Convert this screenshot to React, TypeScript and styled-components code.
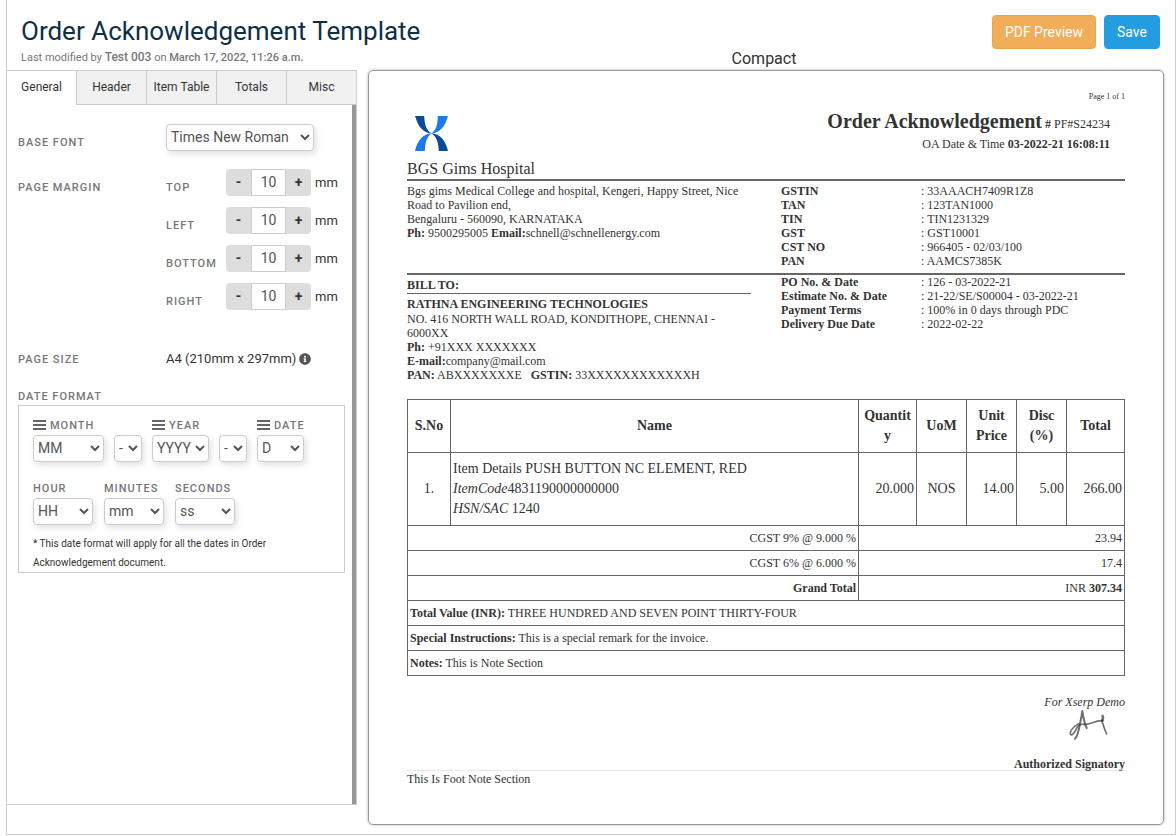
import React from "react";
import styled, { createGlobalStyle, css } from "styled-components";
import { FaInfoCircle } from "react-icons/fa";

const GlobalStyle = createGlobalStyle`
  *, *::before, *::after { box-sizing: border-box; }
  body {
    margin: 0;
    background: #fff;
    color: #333;
    font-family: Roboto, "Liberation Sans", sans-serif;
    font-size: 14px;
    line-height: 20px;
  }
`;

const Frame = styled.main`
  display: grid;
  grid-template-columns: 350px minmax(0, 1fr);
  grid-template-rows: 49px 21px 1fr;
  column-gap: 11px;
  min-height: calc(100vh - 1px);
  margin-left: 6px;
  border: 1px solid #ccc;
  border-top: 0;
`;

const TitleBlock = styled.header`
  grid-row: 1 / 3;
  padding: 14px 0 0 14px;
  white-space: nowrap;
`;

const Title = styled.h1`
  margin: 0;
  color: #0f2f47;
  font-size: 26px;
  font-weight: 400;
  line-height: 34px;
`;

const Modified = styled.p`
  margin: 0;
  color: #777;
  font-size: 11px;
  line-height: 18px;

  b {
    font-weight: 500;
  }
`;

const Editor = styled.b`
  font-size: 12px;
`;

const Actions = styled.div`
  grid-column: 2;
  display: flex;
  justify-content: flex-end;
  gap: 8px;
  padding: 15px 15px 0 0;
`;

const ActionButton = styled.button<{ $tone: "orange" | "blue" }>`
  height: 34px;
  padding: 0 12px;
  border: 1px solid ${(p) => (p.$tone === "orange" ? "#eea249" : "#239ddf")};
  border-radius: 4px;
  background: ${(p) => (p.$tone === "orange" ? "#f0ad5a" : "#239ddf")};
  color: #fff;
  font: 14px/20px Roboto, sans-serif;
  cursor: pointer;
`;

const LayoutName = styled.h2`
  grid-column: 2;
  margin: 0 15px 0 0;
  font-size: 16px;
  font-weight: 400;
  line-height: 20px;
  text-align: center;
`;

const Settings = styled.section`
  display: flex;
  flex-direction: column;
  margin-bottom: 29px;
  border-bottom: 1px solid #ccc;
  border-right: 1px solid #ccc;
`;

const Tabs = styled.div`
  display: grid;
  grid-template-columns: 69px repeat(4, 1fr);
  border-top: 1px solid #ccc;
`;

const Tab = styled.button<{ $active?: boolean }>`
  height: 34px;
  padding: 0 0 2px;
  border: solid #ccc;
  border-width: 0 0 1px 1px;
  background: #f1f1f1;
  color: #333;
  font: 12px/20px Roboto, sans-serif;
  white-space: nowrap;
  cursor: pointer;
  ${(p) =>
    p.$active &&
    css`
      border-color: transparent;
      border-left-width: 0;
      background: #fff;
    `}
`;

const Panel = styled.div`
  flex: 1;
  padding: 19px 7px 20px 11px;
  border-right: 4px solid #979797;
`;

const fieldLabel = css`
  color: #777;
  font-size: 11px;
  font-weight: 500;
  letter-spacing: 1px;
  line-height: 16px;
`;

const FieldRow = styled.div`
  display: grid;
  grid-template-columns: 148px 1fr;
  margin-bottom: 18px;
`;

const FieldLabel = styled.label`
  ${fieldLabel}
  padding-top: 11px;
`;

const FieldName = styled.span`
  ${fieldLabel}
  padding-top: 11px;
`;

const Select = styled.select<{ $width: number }>`
  width: ${(p) => p.$width}px;
  height: 27px;
  padding: 0 0 1px;
  border: 1px solid #ccc;
  border-radius: 4px;
  background: #fff;
  box-shadow: 2px 3px 6px rgba(0, 0, 0, 0.12);
  color: #555;
  font: 14px/20px Roboto, sans-serif;
`;

const Margins = styled.div`
  display: grid;
  gap: 11px;
`;

const MarginRow = styled.div`
  display: grid;
  grid-template-columns: 60px 85px auto;
  height: 27px;
`;

const Stepper = styled.div`
  display: grid;
  grid-template-columns: 25px 35px 25px;
  overflow: hidden;
  border-radius: 4px;
`;

const StepButton = styled.button`
  padding: 0 0 2px;
  border: 0;
  background: #ddd;
  color: #333;
  font: bold 14px/20px Roboto, sans-serif;
  cursor: pointer;
`;

const StepInput = styled.input`
  width: 35px;
  padding: 0 0 1px;
  border: 1px solid #ccc;
  background: #fff;
  color: #555;
  font: 14px/20px Roboto, sans-serif;
  text-align: center;
`;

const Unit = styled.span`
  padding: 4px 0 0 4px;
  font-size: 13px;
`;

const PageSizeRow = styled.div`
  display: grid;
  grid-template-columns: 148px 1fr;
  align-items: center;
  margin: 39px 0 19px;
`;

const PlainLabel = styled.span`
  ${fieldLabel}
  padding-top: 1px;
`;

const PageSize = styled.span`
  display: flex;
  align-items: center;
  gap: 3px;
  font-size: 13px;

  svg {
    color: #555;
  }
`;

const DateFormat = styled.fieldset`
  min-width: 0;
  margin: 0;
  padding: 0;
  border: 0;
`;

const DateLegend = styled.legend`
  ${fieldLabel}
  padding: 1px 0 0;
`;

const DateBox = styled.div`
  padding: 12px 14px 0;
  border: 1px solid #ccc;
`;

const DateRow = styled.div<{ $last?: boolean }>`
  display: flex;
  align-items: flex-end;
  gap: ${(p) => (p.$last ? 11 : 10)}px;
  margin-bottom: ${(p) => (p.$last ? 9 : 19)}px;
`;

const DatePart = styled.div`
  display: flex;
  flex-direction: column;
  gap: 1px;
`;

const PartLabel = styled.label`
  ${fieldLabel}
  display: flex;
  align-items: center;
  gap: 4px;
  white-space: nowrap;
`;

const DateNote = styled.p`
  margin: 0;
  font-size: 10px;
  line-height: 19px;
`;

const Sheet = styled.article`
  margin: 0 11px 9px 0;
  padding: 21px 38px 36px 38px;
  border: 1px solid #999;
  border-radius: 5px;
  box-shadow: 0 0 3px rgba(0, 0, 0, 0.3);
  font-family: "Liberation Serif", serif;
  font-size: 12px;
  line-height: 14px;
`;

const PageNumber = styled.div`
  font-size: 8px;
  line-height: 10px;
  text-align: right;
`;

const Masthead = styled.header`
  display: flex;
  justify-content: space-between;
  border-bottom: 2px solid #666;
`;

const Logo = styled.svg`
  display: block;
  margin: 14px 0 8px 8px;
`;

const CompanyName = styled.div`
  font-size: 16px;
  line-height: 20px;
`;

const DocHeading = styled.div`
  padding: 7px 15px 0 0;
  text-align: right;
`;

const DocTitle = styled.h2`
  margin: 0 0 1px;
  font-size: 12px;
  font-weight: 400;
  line-height: 24px;

  strong {
    font-size: 20px;
  }
`;

const Columns = styled.div<{ $ruled?: boolean }>`
  display: grid;
  grid-template-columns: minmax(0, 344fr) minmax(0, 344fr);
  column-gap: 30px;
  ${(p) => (p.$ruled ? "padding: 3px 0 5px; border-bottom: 2px solid #666;" : "padding-bottom: 17px;")}
`;

const Facts = styled.dl`
  display: grid;
  grid-template-columns: 140px 1fr;
  align-content: start;
  margin: 0;

  dt {
    font-weight: 700;
  }

  dd {
    margin: 0;
  }
`;

const BillTitle = styled.h3`
  margin: 0 0 3px;
  padding: 3px 0 1px;
  border-bottom: 1px solid #666;
  font-size: 12px;
`;

const PartyName = styled.div`
  margin-bottom: 1px;
  font-weight: 700;
`;

const Items = styled.table`
  width: 100%;
  border-collapse: collapse;
  table-layout: fixed;
`;

const HeadCell = styled.th<{ $width?: number }>`
  width: ${(p) => (p.$width ? `${p.$width}px` : "auto")};
  height: 53px;
  padding: 0 4px;
  border: 1px solid #666;
  font-size: 14px;
  line-height: 20px;
  overflow-wrap: break-word;
`;

const ItemCell = styled.td<{ $align?: string }>`
  height: 73px;
  padding: 0 2px;
  border: 1px solid #666;
  font-size: 14px;
  line-height: 20px;
  text-align: ${(p) => p.$align ?? "left"};
`;

const SumCell = styled.td<{ $align?: string }>`
  height: 25px;
  padding: 0 2px;
  border: 1px solid #666;
  text-align: ${(p) => p.$align ?? "left"};
`;

const Signature = styled.div`
  display: flex;
  flex-direction: column;
  align-items: flex-end;
  padding-top: 19px;
  border-bottom: 1px solid #e8e8e8;

  svg {
    display: block;
    margin: 0 16px 18px 0;
  }

  b {
    line-height: 12px;
  }
`;

const FootNote = styled.footer`
  padding-top: 1px;
`;

const Bars = () => (
  <svg width="13" height="12" viewBox="0 0 13 12" aria-hidden="true">
    <path d="M0 1h13M0 5h13M0 9h13" stroke="#666" strokeWidth="2" />
  </svg>
);

const CompanyLogo = () => (
  <Logo width="33" height="35" viewBox="0 0 97 103" role="img" aria-label="Company logo">
    <path d="M0 0H27C28 24 33 43 49 51C24 50 9 32 0 0Z" fill="#0c4a98" />
    <path d="M97 0H67C67 24 62 43 48 51C73 50 88 32 97 0Z" fill="#1b79ec" />
    <path d="M0 103H29C30 79 34 61 49 51C24 53 7 71 0 103Z" fill="#1b79ec" />
    <path d="M97 103H70C69 79 64 61 48 51C73 53 90 71 97 103Z" fill="#0c4a98" />
  </Logo>
);

const SignatureMark = () => (
  <svg width="40" height="31" viewBox="0 0 120 93" role="img" aria-label="Signature" fill="none" stroke="#333" strokeOpacity="0.7" strokeLinecap="round" strokeLinejoin="round">
    <path d="M18 89C26 84 30 60 34 40C37 25 39 13 40 6C42 20 46 42 53 57" strokeWidth="6" />
    <path d="M29 44C18 51 2 64 4 75C7 82 15 73 21 62C26 50 32 44 44 46C62 49 78 33 101 35" strokeWidth="5" />
    <path d="M101 21C103 25 102 29 100 35" strokeWidth="8" />
    <path d="M99 34C101 47 107 61 113 75" strokeWidth="5" />
  </svg>
);

const TABS = ["General", "Header", "Item Table", "Totals", "Misc"];
const MARGINS = ["Top", "Left", "Bottom", "Right"];

const COMPANY_FACTS = [
  ["GSTIN", "33AAACH7409R1Z8"],
  ["TAN", "123TAN1000"],
  ["TIN", "TIN1231329"],
  ["GST", "GST10001"],
  ["CST NO", "966405 - 02/03/100"],
  ["PAN", "AAMCS7385K"],
];

const ORDER_FACTS = [
  ["PO No. & Date", "126 - 03-2022-21"],
  ["Estimate No. & Date", "21-22/SE/S00004 - 03-2022-21"],
  ["Payment Terms", "100% in 0 days through PDC"],
  ["Delivery Due Date", "2022-02-22"],
];

const FactList = ({ rows }: { rows: string[][] }) => (
  <Facts>
    {rows.map(([name, value]) => (
      <React.Fragment key={name}>
        <dt>{name}</dt>
        <dd>: {value}</dd>
      </React.Fragment>
    ))}
  </Facts>
);

type PartProps = { id: string; label: string; value: string; width: number; movable?: boolean };

const DateSelect = ({ id, label, value, width, movable }: PartProps) => (
  <DatePart>
    <PartLabel htmlFor={id}>
      {movable && <Bars />}
      {label}
    </PartLabel>
    <Select id={id} $width={width}>
      <option>{value}</option>
    </Select>
  </DatePart>
);

const Separator = ({ label }: { label: string }) => (
  <Select $width={28} aria-label={label}>
    <option>-</option>
  </Select>
);

const GeneralPanel = () => (
  <Panel role="tabpanel" aria-label="General">
    <FieldRow>
      <FieldLabel htmlFor="base-font">BASE FONT</FieldLabel>
      <Select id="base-font" $width={148}>
        <option>Times New Roman</option>
      </Select>
    </FieldRow>
    <FieldRow>
      <FieldName>PAGE MARGIN</FieldName>
      <Margins>
        {MARGINS.map((side) => (
          <MarginRow key={side}>
            <FieldLabel htmlFor={`margin-${side}`}>{side.toUpperCase()}</FieldLabel>
            <Stepper>
              <StepButton type="button">-</StepButton>
              <StepInput id={`margin-${side}`} defaultValue="10" />
              <StepButton type="button">+</StepButton>
            </Stepper>
            <Unit>mm</Unit>
          </MarginRow>
        ))}
      </Margins>
    </FieldRow>
    <PageSizeRow>
      <PlainLabel>PAGE SIZE</PlainLabel>
      <PageSize>
        A4 (210mm x 297mm) <FaInfoCircle size={12} />
      </PageSize>
    </PageSizeRow>
    <DateFormat>
      <DateLegend>DATE FORMAT</DateLegend>
      <DateBox>
        <DateRow>
          <DateSelect id="month" label="MONTH" value="MM" width={71} movable />
          <Separator label="First separator" />
          <DateSelect id="year" label="YEAR" value="YYYY" width={57} movable />
          <Separator label="Second separator" />
          <DateSelect id="date" label="DATE" value="D" width={47} movable />
        </DateRow>
        <DateRow $last>
          <DateSelect id="hour" label="HOUR" value="HH" width={60} />
          <DateSelect id="minutes" label="MINUTES" value="mm" width={60} />
          <DateSelect id="seconds" label="SECONDS" value="ss" width={60} />
        </DateRow>
        <DateNote>* This date format will apply for all the dates in Order Acknowledgement document.</DateNote>
      </DateBox>
    </DateFormat>
  </Panel>
);

const ItemTable = () => (
  <Items>
    <thead>
      <tr>
        <HeadCell $width={43}>S.No</HeadCell>
        <HeadCell>Name</HeadCell>
        <HeadCell $width={58}>Quantity</HeadCell>
        <HeadCell $width={50}>UoM</HeadCell>
        <HeadCell $width={50}>Unit Price</HeadCell>
        <HeadCell $width={50}>Disc (%)</HeadCell>
        <HeadCell $width={58}>Total</HeadCell>
      </tr>
    </thead>
    <tbody>
      <tr>
        <ItemCell $align="center">1.</ItemCell>
        <ItemCell>
          Item Details PUSH BUTTON NC ELEMENT, RED
          <br />
          <i>ItemCode</i>4831190000000000
          <br />
          <i>HSN/SAC</i> 1240
        </ItemCell>
        <ItemCell $align="right">20.000</ItemCell>
        <ItemCell $align="center">NOS</ItemCell>
        <ItemCell $align="right">14.00</ItemCell>
        <ItemCell $align="right">5.00</ItemCell>
        <ItemCell $align="right">266.00</ItemCell>
      </tr>
      <tr>
        <SumCell colSpan={2} $align="right">CGST 9% @ 9.000 %</SumCell>
        <SumCell colSpan={5} $align="right">23.94</SumCell>
      </tr>
      <tr>
        <SumCell colSpan={2} $align="right">CGST 6% @ 6.000 %</SumCell>
        <SumCell colSpan={5} $align="right">17.4</SumCell>
      </tr>
      <tr>
        <SumCell colSpan={2} $align="right"><b>Grand Total</b></SumCell>
        <SumCell colSpan={5} $align="right">INR <b>307.34</b></SumCell>
      </tr>
      <tr>
        <SumCell colSpan={7}><b>Total Value (INR):</b> THREE HUNDRED AND SEVEN POINT THIRTY-FOUR</SumCell>
      </tr>
      <tr>
        <SumCell colSpan={7}><b>Special Instructions:</b> This is a special remark for the invoice.</SumCell>
      </tr>
      <tr>
        <SumCell colSpan={7}><b>Notes:</b> This is Note Section</SumCell>
      </tr>
    </tbody>
  </Items>
);

const Preview = () => (
  <Sheet>
    <PageNumber>Page 1 of 1</PageNumber>
    <Masthead>
      <div>
        <CompanyLogo />
        <CompanyName>BGS Gims Hospital</CompanyName>
      </div>
      <DocHeading>
        <DocTitle>
          <strong>Order Acknowledgement</strong> <b>#</b> PF#S24234
        </DocTitle>
        OA Date &amp; Time <b>03-2022-21 16:08:11</b>
      </DocHeading>
    </Masthead>
    <Columns $ruled>
      <div>
        Bgs gims Medical College and hospital, Kengeri, Happy Street, Nice Road to Pavilion end,
        <br />
        Bengaluru - 560090, KARNATAKA
        <br />
        <b>Ph:</b> 9500295005 <b>Email:</b>schnell@schnellenergy.com
      </div>
      <FactList rows={COMPANY_FACTS} />
    </Columns>
    <Columns>
      <div>
        <BillTitle>BILL TO:</BillTitle>
        <PartyName>RATHNA ENGINEERING TECHNOLOGIES</PartyName>
        NO. 416 NORTH WALL ROAD, KONDITHOPE, CHENNAI - 6000XX
        <br />
        <b>Ph:</b> +91XXX XXXXXXX
        <br />
        <b>E-mail:</b>company@mail.com
        <br />
        <b>PAN:</b> ABXXXXXXXE &nbsp; <b>GSTIN:</b> 33XXXXXXXXXXXXH
      </div>
      <FactList rows={ORDER_FACTS} />
    </Columns>
    <ItemTable />
    <Signature>
      <i>For Xserp Demo</i>
      <SignatureMark />
      <b>Authorized Signatory</b>
    </Signature>
    <FootNote>This Is Foot Note Section</FootNote>
  </Sheet>
);

export default function App() {
  return (
    <>
      <GlobalStyle />
      <Frame>
        <TitleBlock>
          <Title>Order Acknowledgement Template</Title>
          <Modified>
            Last modified by <Editor>Test 003</Editor> on <b>March 17, 2022, 11:26 a.m.</b>
          </Modified>
        </TitleBlock>
        <Actions>
          <ActionButton type="button" $tone="orange">PDF Preview</ActionButton>
          <ActionButton type="button" $tone="blue">Save</ActionButton>
        </Actions>
        <LayoutName>Compact</LayoutName>
        <Settings>
          <Tabs role="tablist">
            {TABS.map((name, i) => (
              <Tab key={name} type="button" role="tab" aria-selected={i === 0} $active={i === 0}>
                {name}
              </Tab>
            ))}
          </Tabs>
          <GeneralPanel />
        </Settings>
        <Preview />
      </Frame>
    </>
  );
}
